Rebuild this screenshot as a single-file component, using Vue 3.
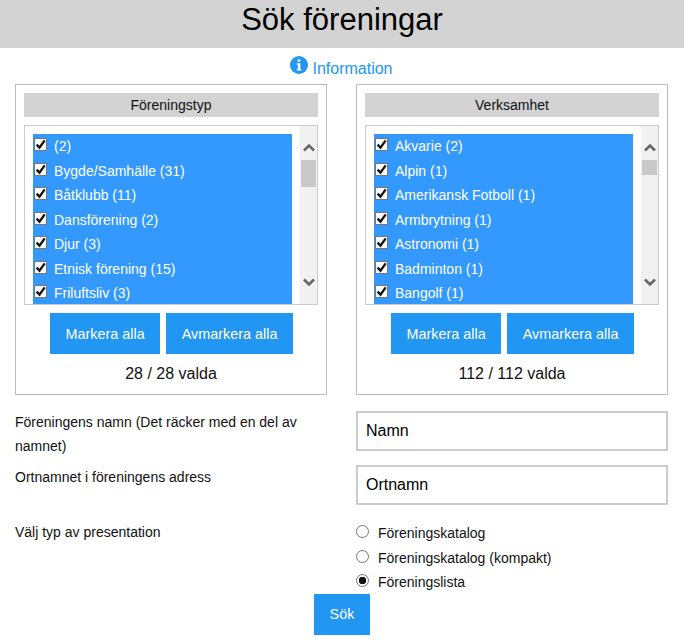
<template>
  <div class="page">
    <header class="top">
      <h1>Sök föreningar</h1>
    </header>

    <div class="info">
      <svg class="info-icon" viewBox="0 0 18 18" width="18" height="18">
        <circle cx="9" cy="9" r="9" fill="#2196f3" />
        <rect x="7.6" y="3.2" width="2.8" height="2.6" rx="1" fill="#fff" />
        <path d="M6.8 7.2h3.6v6h1v1.4H6.8v-1.4h1v-4.6h-1z" fill="#fff" />
      </svg>
      <a class="info-link">Information</a>
    </div>

    <div class="panels">
      <section v-for="panel in panels" :key="panel.title" class="panel">
        <div class="panel-title">{{ panel.title }}</div>
        <div class="listbox">
          <div class="list-scroll">
            <ul class="list">
              <li v-for="item in panel.items" :key="item">
                <span class="check">
                  <svg viewBox="0 0 13 13" width="13" height="13">
                    <path d="M2.6 6.6l2.9 3 5.2-7.2" fill="none" stroke="#111" stroke-width="2.3" />
                  </svg>
                </span>
                <span>{{ item }}</span>
              </li>
            </ul>
          </div>
          <div class="scrollbar">
            <svg class="arrow up" viewBox="0 0 12 9" width="12" height="9">
              <path d="M1 7.5l5-5 5 5" fill="none" stroke="#666" stroke-width="2.6" />
            </svg>
            <div class="track">
              <div class="thumb" :style="{ height: panel.thumb + 'px' }"></div>
            </div>
            <svg class="arrow down" viewBox="0 0 12 9" width="12" height="9">
              <path d="M1 1.5l5 5 5-5" fill="none" stroke="#666" stroke-width="2.6" />
            </svg>
          </div>
        </div>
        <div class="panel-buttons">
          <button class="btn">Markera alla</button>
          <button class="btn">Avmarkera alla</button>
        </div>
        <div class="count">{{ panel.count }}</div>
      </section>
    </div>

    <div class="form-row first">
      <label>Föreningens namn (Det räcker med en del av namnet)</label>
      <input type="text" value="Namn" />
    </div>
    <div class="form-row second">
      <label>Ortnamnet i föreningens adress</label>
      <input type="text" value="Ortnamn" />
    </div>
    <div class="form-row third">
      <label>Välj typ av presentation</label>
      <div class="radios">
        <label v-for="opt in presentations" :key="opt" class="radio">
          <input type="radio" name="pres" :checked="opt === 'Föreningslista'" />
          <span>{{ opt }}</span>
        </label>
      </div>
    </div>

    <div class="submit">
      <button class="btn search">Sök</button>
    </div>
  </div>
</template>

<script setup>
const panels = [
  {
    title: 'Föreningstyp',
    count: '28 / 28 valda',
    thumb: 27,
    items: [
      '(2)',
      'Bygde/Samhälle (31)',
      'Båtklubb (11)',
      'Dansförening (2)',
      'Djur (3)',
      'Etnisk förening (15)',
      'Friluftsliv (3)',
    ],
  },
  {
    title: 'Verksamhet',
    count: '112 / 112 valda',
    thumb: 15,
    items: [
      'Akvarie (2)',
      'Alpin (1)',
      'Amerikansk Fotboll (1)',
      'Armbrytning (1)',
      'Astronomi (1)',
      'Badminton (1)',
      'Bangolf (1)',
    ],
  },
]

const presentations = ['Föreningskatalog', 'Föreningskatalog (kompakt)', 'Föreningslista']
</script>

<style>
html,
body {
  margin: 0;
  background: #fff;
}
</style>

<style scoped>
.page {
  font-family: "Liberation Sans", Arial, sans-serif;
  font-size: 14px;
  line-height: 24.5px;
  color: #111;
  height: 640px;
  overflow: hidden;
}

.top {
  background: #d3d3d3;
  height: 48px;
  text-align: center;
}

.top h1 {
  margin: 0;
  font-size: 31px;
  font-weight: 400;
  line-height: 40px;
  color: #000;
}

.info {
  height: 36px;
  display: flex;
  justify-content: center;
  align-items: flex-start;
  gap: 4px;
  padding-right: 1px;
}

.info-icon {
  margin-top: 8px;
}

.info-link {
  color: #2196f3;
  font-size: 16px;
  line-height: 28px;
  margin-top: 7px;
}

.panels {
  display: grid;
  grid-template-columns: 312px 312px;
  column-gap: 29px;
  padding-left: 15px;
}

.panel {
  border: 1px solid #bbb;
  padding: 8px;
  height: 311px;
  box-sizing: border-box;
}

.panel-title {
  background: #d3d3d3;
  height: 24px;
  line-height: 24px;
  text-align: center;
}

.listbox {
  margin-top: 8px;
  height: 180px;
  box-sizing: border-box;
  border: 1px solid #ccc;
  display: flex;
}

.list-scroll {
  flex: 1;
  overflow: hidden;
  padding: 8px 8px 0;
  min-width: 0;
}

.list {
  list-style: none;
  margin: 0;
  padding: 0;
  background: #3399ff;
  color: #fff;
  height: 180px;
}

.list li {
  height: 24.5px;
  display: flex;
  align-items: center;
}

.check {
  width: 11px;
  height: 11px;
  border: 1px solid #767676;
  background: #fff;
  margin: -3px 7px 0 1px;
  flex: none;
  position: relative;
}

.check svg {
  position: absolute;
  left: -1px;
  top: -1px;
}

.scrollbar {
  width: 17px;
  flex: none;
  background: #f1f1f1;
  display: flex;
  flex-direction: column;
  align-items: center;
}

.arrow {
  flex: none;
}

.arrow.up {
  margin-top: 17px;
}

.arrow.down {
  margin-bottom: 17px;
}

.track {
  flex: 1;
  width: 100%;
  padding-top: 8px;
  box-sizing: border-box;
}

.thumb {
  width: 15px;
  margin: 0 auto;
  background: #c9c9c9;
}

.panel-buttons {
  display: flex;
  justify-content: center;
  gap: 6px;
  margin-top: 8px;
  padding-left: 1px;
}

.btn {
  background: #2196f3;
  color: #fff;
  border: 0;
  font-family: inherit;
  font-size: 14.4px;
  line-height: normal;
  white-space: nowrap;
  height: 41px;
  padding: 0 15.5px;
}

.count {
  text-align: center;
  font-size: 16px;
  line-height: 28px;
  margin-top: 6px;
}

.form-row {
  display: grid;
  grid-template-columns: 312px 312px;
  column-gap: 29px;
  padding-left: 15px;
}

.form-row > label {
  line-height: 24px;
}

.form-row.first {
  margin-top: 16px;
}

.form-row.first > label {
  margin-top: -1px;
}

.form-row.second {
  margin-top: 7px;
}

.form-row.third {
  margin-top: 15px;
}

.form-row input[type="text"] {
  height: 40px;
  box-sizing: border-box;
  border: 2px solid #ccc;
  padding: 0 8px 1px;
  font-family: inherit;
  font-size: 16px;
  color: #000;
  outline: none;
}

.radios {
  display: flex;
  flex-direction: column;
  margin: 1px 0 -1px;
}

.radio {
  display: flex;
  align-items: center;
  gap: 9px;
  height: 24.5px;
}

.radio input {
  appearance: none;
  width: 13px;
  height: 13px;
  margin: -3px 0 0;
  border: 1px solid #767676;
  border-radius: 50%;
  background: #fff;
  flex: none;
}

.radio input:checked {
  background: radial-gradient(circle, #111 0 3.5px, #fff 4px);
}

.submit {
  display: flex;
  justify-content: center;
}

.search {
  width: 56px;
  padding: 0;
}
</style>
